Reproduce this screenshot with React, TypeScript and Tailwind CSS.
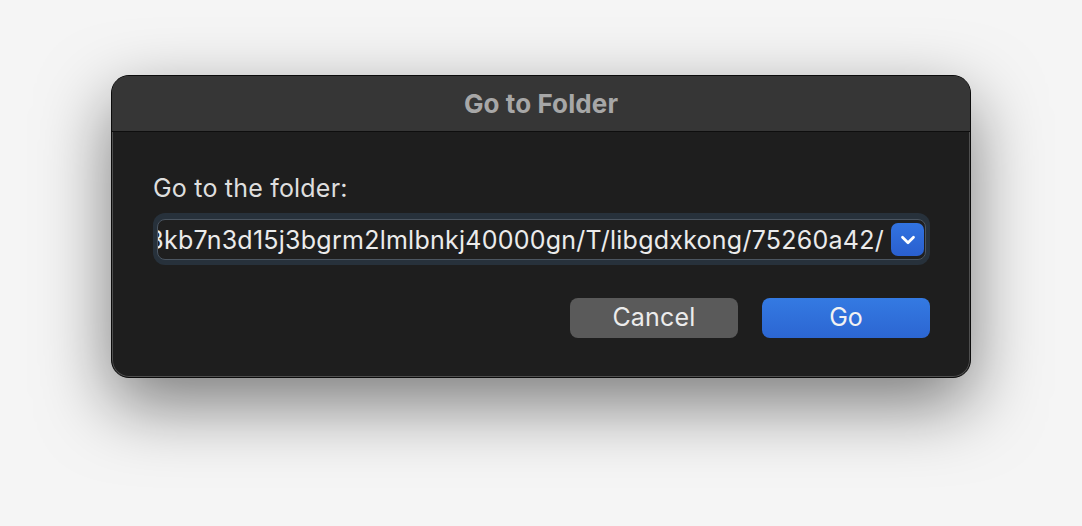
import { ChevronDown } from "lucide-react";

const path = "/var/folders/8t/hw3kb7n3d15j3bgrm2lmlbnkj40000gn/T/libgdxkong/75260a42/";

export default function App() {
  return (
    <div className="h-[526px] w-full bg-[#f5f5f5] pt-[75px] font-['Inter',sans-serif]">
      <div className="mx-auto w-[860px] overflow-hidden rounded-[18px] border border-[#0c0c0c] bg-[#1e1e1e] shadow-[inset_0_0_0_1px_rgba(255,255,255,0.22),0_26px_70px_rgba(0,0,0,0.5)]">
        <div className="flex h-[56px] items-center justify-center border-b border-[#0e0e0e] bg-[#363636] text-[26px] font-bold tracking-[0.1px] text-[#a7a7a7]">
          Go to Folder
        </div>
        <div className="pl-[41px] pr-[40px] pt-[41px] pb-[39px]">
          <div className="text-[25px] leading-[30px] tracking-[0.2px] text-[#dedede]">Go to the folder:</div>
          <div className="mt-[10px] rounded-[12px] bg-[#27313b] px-[4px] pt-[6px] pb-[5px]">
            <div className="flex h-[41px] items-center gap-[7px] rounded-[8px] border border-[#4b5560] bg-[#1f1f1f] pr-[1px]">
              <div className="flex min-w-0 flex-1 justify-end overflow-hidden whitespace-nowrap text-[25px] leading-[30px] tracking-[0.25px] text-[#ebebeb]">
                {path}
              </div>
              <div className="flex h-[33px] w-[33px] shrink-0 items-center justify-center rounded-[7px] bg-gradient-to-b from-[#3273e0] to-[#2a5fcf]">
                <ChevronDown size={22} strokeWidth={3} color="#ffffff" />
              </div>
            </div>
          </div>
          <div className="mt-[33px] flex justify-end gap-[24px]">
            <button className="h-[40px] w-[168px] rounded-[8px] bg-[#5a5a5a] text-[25px] tracking-[0.2px] text-[#ececec]">
              Cancel
            </button>
            <button className="h-[40px] w-[168px] rounded-[8px] bg-gradient-to-b from-[#347ae2] to-[#2c66d2] text-[25px] text-[#f2f2f2]">
              Go
            </button>
          </div>
        </div>
      </div>
    </div>
  );
}
